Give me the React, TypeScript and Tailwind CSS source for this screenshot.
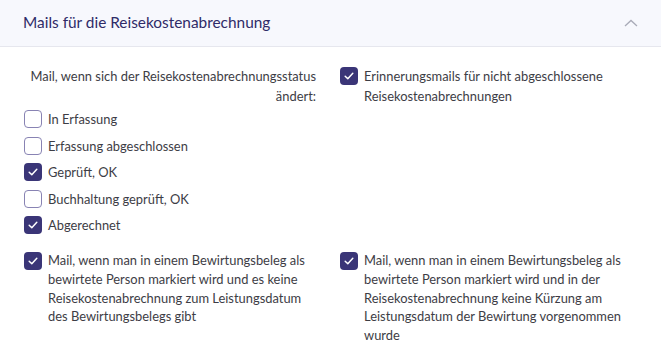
import { useState } from 'react'

type Option = {
  id: string
  label: string
  checked: boolean
}

const STATUS_OPTIONS: Option[] = [
  { id: 'erfassung', label: 'In Erfassung', checked: false },
  { id: 'abgeschlossen', label: 'Erfassung abgeschlossen', checked: false },
  { id: 'geprueft', label: 'Geprüft, OK', checked: true },
  { id: 'buchhaltung', label: 'Buchhaltung geprüft, OK', checked: false },
  { id: 'abgerechnet', label: 'Abgerechnet', checked: true },
]

const HOST_A = [
  'Mail, wenn man in einem Bewirtungsbeleg als',
  'bewirtete Person markiert wird und es keine',
  'Reisekostenabrechnung zum Leistungsdatum',
  'des Bewirtungsbelegs gibt',
]

const HOST_B = [
  'Mail, wenn man in einem Bewirtungsbeleg als',
  'bewirtete Person markiert wird und in der',
  'Reisekostenabrechnung keine Kürzung am',
  'Leistungsdatum der Bewirtung vorgenommen',
  'wurde',
]

function Box({ checked, onClick }: { checked: boolean; onClick: () => void }) {
  return (
    <button
      type="button"
      onClick={onClick}
      className={
        checked
          ? 'w-[18px] h-[18px] shrink-0 rounded-[4px] bg-[#3a3577] flex items-center justify-center'
          : 'w-[18px] h-[18px] shrink-0 rounded-[4px] border border-[#8883b3] bg-white'
      }
    >
      {checked && (
        <svg width="12" height="12" viewBox="0 0 12 12" fill="none">
          <path d="M2.2 6.2 4.8 8.7 9.8 3.3" stroke="white" strokeWidth="1.5" strokeLinecap="round" strokeLinejoin="round" />
        </svg>
      )}
    </button>
  )
}

function Lines({ lines }: { lines: string[] }) {
  return (
    <span className="flex flex-col whitespace-nowrap">
      {lines.map(l => (
        <span key={l}>{l}</span>
      ))}
    </span>
  )
}

export default function App() {
  const [status, setStatus] = useState(STATUS_OPTIONS)
  const [reminder, setReminder] = useState(true)
  const [hostA, setHostA] = useState(true)
  const [hostB, setHostB] = useState(true)

  return (
    <div className="w-[661px] h-[364px] overflow-hidden bg-white text-[#3d3d45]" style={{ fontFamily: 'Lato, "Noto Sans", sans-serif' }}>
      <div className="h-[47px] bg-[#f7f8fd] border-b border-[#e6e7ee] flex items-center justify-between pl-[23px] pr-[23px]">
        <h2 className="text-[15.4px] text-[#2f2b68]">Mails für die Reisekostenabrechnung</h2>
        <svg width="14" height="8" viewBox="0 0 14 8" fill="none">
          <path d="M1 7 7 1.5 13 7" stroke="#a9abb8" strokeWidth="1.3" />
        </svg>
      </div>

      <div className="grid grid-cols-[316px_1fr] pl-[24px] pt-[19px] text-[12.9px]">
        <div>
          <div className="flex justify-end pr-[24px] leading-[20px] text-right">
            <span className="flex flex-col items-end whitespace-nowrap">
              <span>Mail, wenn sich der Reisekostenabrechnungsstatus</span>
              <span>ändert:</span>
            </span>
          </div>
          <div className="mt-[4px] flex flex-col gap-[8.5px]">
            {status.map(o => (
              <label key={o.id} className="flex items-center gap-[6px] leading-[18px]">
                <Box
                  checked={o.checked}
                  onClick={() => setStatus(s => s.map(x => (x.id === o.id ? { ...x, checked: !x.checked } : x)))}
                />
                <span>{o.label}</span>
              </label>
            ))}
          </div>
        </div>
        <div>
          <label className="flex items-start gap-[6px] leading-[20px]">
            <span className="mt-[1px]">
              <Box checked={reminder} onClick={() => setReminder(r => !r)} />
            </span>
            <Lines lines={['Erinnerungsmails für nicht abgeschlossene', 'Reisekostenabrechnungen']} />
          </label>
        </div>

        <label className="flex items-start gap-[6px] leading-[18.8px] mt-[17px]">
          <span className="mt-[1px]">
            <Box checked={hostA} onClick={() => setHostA(r => !r)} />
          </span>
          <Lines lines={HOST_A} />
        </label>
        <label className="flex items-start gap-[6px] leading-[18.8px] mt-[17px]">
          <span className="mt-[1px]">
            <Box checked={hostB} onClick={() => setHostB(r => !r)} />
          </span>
          <Lines lines={HOST_B} />
        </label>
      </div>
    </div>
  )
}
